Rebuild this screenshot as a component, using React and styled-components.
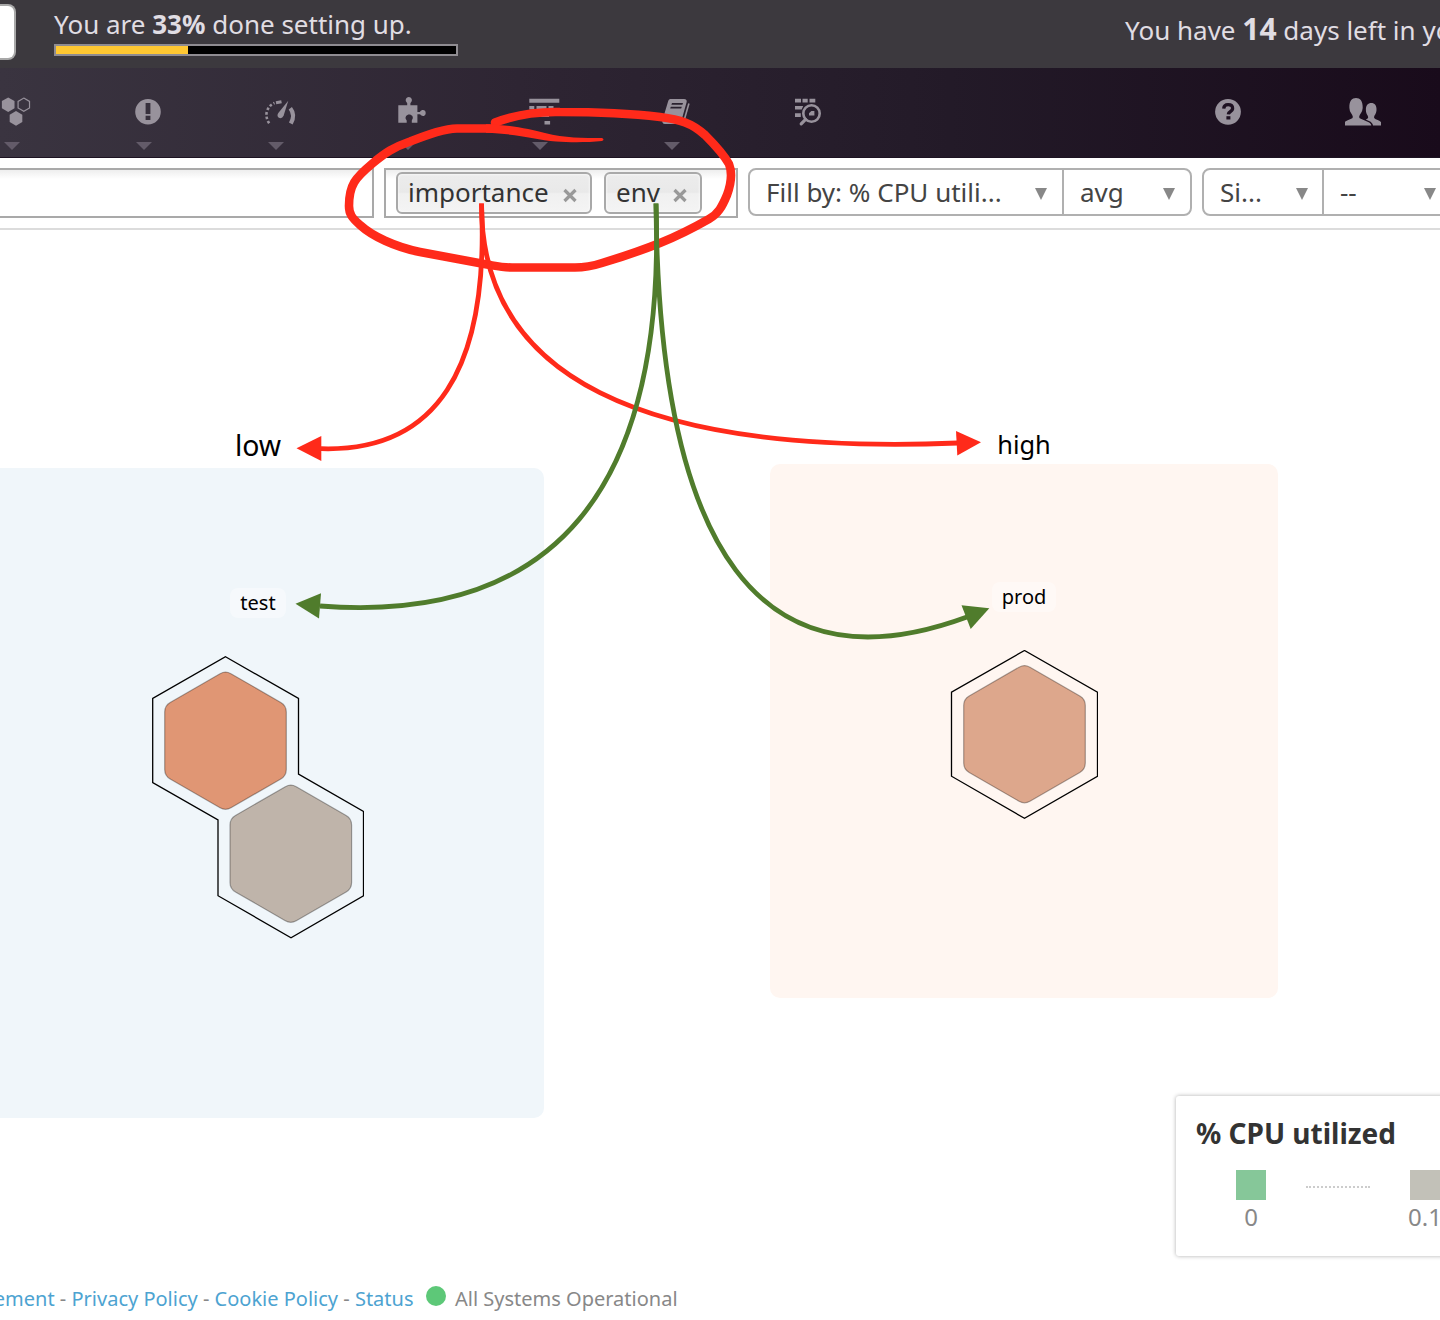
import React from "react";
import styled, { createGlobalStyle } from "styled-components";

const Global = createGlobalStyle`
  * { box-sizing: border-box; }
  html, body { margin: 0; background: #fff; overflow: hidden; }
  body { font-family: "Noto Sans", "Open Sans", sans-serif; }
`;

const Page = styled.div`
  position: relative;
  display: flex;
  flex-direction: column;
  width: 1440px;
  height: 1320px;
  overflow: hidden;
  background: #fff;
`;

const TrialBar = styled.header`
  display: flex;
  height: 68px;
  flex: none;
  background: #3c393e;
  color: #e0dde3;
  font-size: 26px;
  line-height: 36px;
  white-space: nowrap;
`;

const TrialButton = styled.div`
  width: 16px;
  height: 56px;
  flex: none;
  margin-top: 4px;
  background: #fff;
  border: 2px solid #a8a8a8;
  border-left: 0;
  border-radius: 0 8px 8px 0;
`;

const Setup = styled.div`
  width: 404px;
  flex: none;
  margin: 6px 0 0 38px;
`;

const SetupText = styled.div`
  height: 38px;
`;

const Progress = styled.div`
  height: 12px;
  border: 2px solid #8f8c91;
  background: #000;
`;

const ProgressFill = styled.div`
  width: 33%;
  height: 100%;
  background: #ffc832;
`;

const TrialText = styled.div`
  flex: none;
  margin: 7px 0 0 667px;
  line-height: 44px;
  strong { font-size: 30px; }
`;

const Nav = styled.nav`
  display: flex;
  height: 90px;
  flex: none;
  background: linear-gradient(90deg, #3a3440 0%, #2e2533 36%, #231a28 66%, #190b1b 100%);
  border-bottom: 1px solid #1d1322;
`;

const NavItem = styled.div`
  display: flex;
  flex-direction: column;
  width: 132px;
  flex: none;
  margin-left: ${(p) => p.$before || 0}px;
  padding-top: 26px;
  color: #98929c;
`;

const NavIcon = styled.svg`
  width: 40px;
  height: 36px;
  fill: currentColor;
`;

const Caret = styled.span`
  width: 0;
  margin: 12px 0 0 4px;
  border: 8px solid transparent;
  border-top-color: #635b69;
  border-bottom: 0;
`;

const Filters = styled.section`
  display: flex;
  height: 72px;
  flex: none;
  gap: 10px;
  padding-top: 10px;
  border-bottom: 2px solid #dcdcdc;
  color: #444;
  font-size: 26px;
`;

const Field = styled.div`
  display: flex;
  gap: 12px;
  flex: none;
  width: ${(p) => p.$width}px;
  height: 50px;
  padding: 2px 10px;
  border: 2px solid #a9a9a9;
  border-left-width: ${(p) => (p.$cut ? 0 : 2)}px;
  background: linear-gradient(#eee, #fff 9px);
`;

const Chip = styled.div`
  display: flex;
  justify-content: space-between;
  width: ${(p) => p.$width}px;
  height: 42px;
  padding: 0 12.5px 0 10px;
  border: 2px solid #a9a9a9;
  border-radius: 6px;
  background: linear-gradient(#ececec, #e9e9e9 48%, #f0f0f0 52%, #f4f4f4);
  box-shadow: inset 0 0 3px #fff;
  color: #333;
  line-height: 37px;
`;

const Remove = styled.svg`
  width: 16px;
  height: 16px;
  margin-top: 13px;
  stroke: #999;
  stroke-width: 3.2;
`;

const Selects = styled.div`
  display: flex;
  flex: none;
  height: 48px;
  width: ${(p) => p.$width}px;
  border: 2px solid #b0b0b0;
  border-radius: 8px;
`;

const Select = styled.div`
  display: flex;
  justify-content: space-between;
  width: ${(p) => p.$width}px;
  padding: 0 ${(p) => p.$end || 15}px 0 16px;
  line-height: 45px;
  & + & { border-left: 2px solid #b0b0b0; }
`;

const Arrow = styled.span`
  width: 0;
  height: 0;
  margin-top: 18px;
  border: 6px solid transparent;
  border-top: 12px solid #888;
  border-bottom: 0;
`;

const HostMap = styled.main`
  display: flex;
  gap: 226px;
  flex: 1;
  align-items: flex-start;
  margin-left: -28px;
`;

const Group = styled.section`
  width: ${(p) => p.$width}px;
  flex: none;
  text-align: center;
`;

const GroupTitle = styled.h2`
  margin: 0;
  height: ${(p) => p.$height}px;
  padding-top: ${(p) => p.$top}px;
  color: #000;
  font-weight: 400;
  font-size: ${(p) => p.$size}px;
  line-height: 40px;
`;

const GroupBody = styled.div`
  display: flex;
  flex-direction: column;
  align-items: center;
  height: ${(p) => p.$height}px;
  padding-top: ${(p) => p.$top}px;
  background: ${(p) => p.$fill};
  border-radius: 10px;
`;

const SubTitle = styled.div`
  width: ${(p) => p.$width}px;
  height: 30px;
  border-radius: 8px;
  background: rgba(255, 255, 255, 0.4);
  color: #000;
  font-size: 20px;
  line-height: 29px;
`;

const Hosts = styled.svg`
  display: block;
  flex: none;
  margin-top: 38px;
`;

const Outline = styled.path`
  fill: none;
  stroke: #000;
  stroke-width: 1.3;
`;

const Hexagon = styled.path`
  fill: ${(p) => p.$fill};
  stroke: #000;
  stroke-opacity: 0.32;
  stroke-width: 1.2;
`;

const Legend = styled.aside`
  position: absolute;
  left: 1176px;
  top: 1096px;
  width: 400px;
  height: 160px;
  padding: 18px 0 0 20px;
  background: #fff;
  border-radius: 3px;
  box-shadow: 0 0 4px rgba(0, 0, 0, 0.32);
`;

const LegendTitle = styled.div`
  height: 56px;
  color: #333;
  font-size: 28px;
  font-weight: 700;
  line-height: 39px;
`;

const Scale = styled.div`
  display: flex;
  gap: 40px;
  padding-left: 40px;
`;

const Stop = styled.div`
  display: flex;
  flex-direction: column;
  align-items: center;
  width: 30px;
  color: #888;
  font-size: 24px;
  line-height: 34px;
`;

const Swatch = styled.span`
  width: 30px;
  height: 30px;
  background: ${(p) => p.$fill};
`;

const Dots = styled.div`
  width: 64px;
  height: 18px;
  border-bottom: 2px dotted #ccc;
`;

const Footer = styled.footer`
  display: flex;
  height: 44px;
  flex: none;
  color: #888;
  font-size: 20px;
  line-height: 46px;
  white-space: nowrap;
`;

const Links = styled.div`
  display: flex;
  justify-content: flex-end;
  width: 413.5px;
  white-space: pre;
`;

const Link = styled.a`
  color: #4da3d1;
`;

const StatusDot = styled.span`
  width: 20px;
  height: 20px;
  margin: 10px 9px 0 12.5px;
  border-radius: 50%;
  background: #5dc878;
`;

const Markup = styled.svg`
  position: absolute;
  inset: 0;
  pointer-events: none;
`;

const Stroke = styled.path`
  fill: none;
  stroke: ${(p) => p.$color};
  stroke-width: ${(p) => p.$width || 4.8};
  stroke-linecap: ${(p) => p.$cap || "butt"};
  stroke-linejoin: round;
`;

const RED = "#ff2a1a";
const GREEN = "#507c2c";

const hexPoints = (cx, cy, r) =>
  [0, 1, 2, 3, 4, 5].map((i) => {
    const a = (Math.PI / 3) * i - Math.PI / 2;
    return [cx + r * Math.cos(a), cy + r * Math.sin(a)];
  });

const roundedHex = (cx, cy, r = 70.2, k = 0.09) => {
  const pts = hexPoints(cx, cy, r);
  const mix = (a, b) => [a[0] + (b[0] - a[0]) * k, a[1] + (b[1] - a[1]) * k];
  return (
    pts
      .map((p, i) => {
        const a = mix(p, pts[(i + 5) % 6]);
        const b = mix(p, pts[(i + 1) % 6]);
        return `${i ? "L" : "M"}${a} Q${p} ${b}`;
      })
      .join(" ") + "Z"
  );
};

const hex = (cx, cy, r) => "M" + hexPoints(cx, cy, r).join("L") + "Z";

/* Icons share a 40x36 box whose origin is the left edge of each menu entry. */
const icons = {
  hosts: (
    <>
      <path d={hex(8.2, 10.7, 7.3)} />
      <path d={hex(23.8, 10.7, 6.6)} fill="none" stroke="currentColor" strokeWidth="1.2" />
      <path d={hex(16, 24.4, 7.3)} />
    </>
  ),
  alert: (
    <path
      fillRule="evenodd"
      d="M16 5a12.8 12.8 0 1 1 0 25.6a12.8 12.8 0 1 1 0-25.6zM13.6 9v11h4.8V9zM13.6 21.7v4.3h4.8v-4.300z"
    />
  ),
  gauge: (
    <>
      <path d="M5.200 29.300Q1.600 24 2.700 18 4.600 11.500 10.500 9" fill="none" stroke="currentColor" strokeWidth="2.600" strokeDasharray="2.600 2" />
      <path d="M12 8.800 17.500 7.700" fill="none" stroke="currentColor" strokeWidth="3" />
      <path d="M24.300 6.800 19.600 21.800q-1.800 3.600-5.100 1.800-1.900-2-.2-4.600z" />
      <path d="M26.300 14.300Q31.600 21 26.800 29.500" fill="none" stroke="currentColor" strokeWidth="4.200" />
    </>
  ),
  puzzle: (
    <path d="M2.300 11.300h8.900v-2.100q-2.200-1.700-1.400-4c1.300-3 4.800-3 6 0q.8 2.300-1.400 4v2.100h7v6.700h2.500c1.900-3.200 6-2.300 5.800 1.200-.2 3.100-3.700 3.900-5.600 1.100h-2.700v8.500h-5.600v-2.400q2-1.800.6-4.300c-1.500-2.300-4.900-2.300-6.300 0q-1.400 2.500.6 4.300v2.400H2.300z" />
  ),
  monitors: (
    <path d="M1.300 4.700h30v4h-30zM1.300 12h5v3.500h-5zM8.500 12h10v3.500h-10zM20.500 12h5v3.500h-5zM11 19.500h10v3.500H11zM16.500 27h5.600v3.500h-5.600z" />
  ),
  notebook: (
    <>
      <path
        fillRule="evenodd"
        d="M10 4.900H24q3.400.3 2.600 3.300l-5.500 19.600q-.8 2.300-3 2.300H5q-3.500-.3-2.500-4L8.300 6.800q.4-1.400 1.700-1.900zM12 9l-.6 1.700h11L23 9zM10.800 12.700l-.6 1.700h11l.6-1.700z"
      />
      <path d="M28.900 9.500 23.200 29.500" fill="none" stroke="currentColor" strokeWidth="1.600" />
      <path d="M5 27h13" fill="none" stroke="#2b2230" strokeWidth="1.300" />
    </>
  ),
  logs: (
    <>
      <path d="M3 4.800h6v3.600H3zM10.500 4.800h5.200v3.600h-5.200zM17.500 4.800h5.800v3.600h-5.800zM3 12h8.200l-1.500 3.600H3zM3 19.300h5.800V23H3z" />
      <circle cx="19.500" cy="19.500" r="8.200" fill="none" stroke="currentColor" strokeWidth="2.600" />
      <path d="m13.600 25.400-4.400 4.500" fill="none" stroke="currentColor" strokeWidth="3.200" strokeLinecap="round" />
      <path d="M17 21.400v-2.200l2.400-2.200h3v4.400z" />
    </>
  ),
  help: (
    <>
      <circle cx="16" cy="17.800" r="12.900" />
      <path d="M11.700 14.700q.3-4 4.400-4 4.500 0 4.500 3.600 0 2-2.400 3.400-1.800 1-1.900 2.700" fill="none" stroke="#1e1122" strokeWidth="3.300" />
      <path d="M14.400 22.200h4v3.300h-4z" fill="#1e1122" />
    </>
  ),
  users: (
    <path d="M1 31.500v-3.800q1.500-1 5.600-2.600 2.200-1 2.300-2.200-.3-1.600-2.200-4.300-1-1.500-1.300-4.700C5 7 8 4 12 4s7 3 6.700 9.900q-.4 3.200-1.400 4.700-1.900 2.700-2.200 4.300.1 1.200 2.300 2.200l6.200 2.600q3.700 1.500 3.700 3.800zM29 31.500q-.5-3-4-4.500l-3.200-1.500q2.500-.6 2.400-2.200-.2-1.500-1.500-3.300-.8-1.500-.8-3.700C21.700 11 24 9 27.300 9s5.500 2.200 5.200 7.300q-.2 2.400-1 3.700-1.400 1.700-1.500 3.300 0 1.200 1.700 2 4.500 1.700 5.300 3v3.200z" />
  ),
};

const MENU = [
  { icon: "hosts", caret: true },
  { icon: "alert", caret: true },
  { icon: "gauge", caret: true },
  { icon: "puzzle", caret: true },
  { icon: "monitors", caret: true },
  { icon: "notebook", caret: true },
  { icon: "logs" },
  { icon: "help", before: 288 },
  { icon: "users" },
];

function FilterChip({ width, children }) {
  return (
    <Chip $width={width}>
      <span>{children}</span>
      <Remove viewBox="0 0 16 16">
        <path d="M2.500 3 13.500 14M13.500 3 2.500 14" />
      </Remove>
    </Chip>
  );
}

function Dropdown({ width, end, children }) {
  return (
    <Select $width={width} $end={end}>
      <span>{children}</span>
      <Arrow />
    </Select>
  );
}

export default function App() {
  return (
    <>
      <Global />
      <Page>
        <TrialBar>
          <TrialButton />
          <Setup>
            <SetupText>
              You are <strong>33%</strong> done setting up.
            </SetupText>
            <Progress>
              <ProgressFill />
            </Progress>
          </Setup>
          <TrialText>
            You have <strong>14</strong> days left in your trial.
          </TrialText>
        </TrialBar>

        <Nav>
          {MENU.map((m) => (
            <NavItem key={m.icon} $before={m.before}>
              <NavIcon viewBox="0 0 40 36">{icons[m.icon]}</NavIcon>
              {m.caret && <Caret />}
            </NavItem>
          ))}
        </Nav>

        <Filters>
          <Field $width={374} $cut />
          <Field $width={354}>
            <FilterChip width={196}>importance</FilterChip>
            <FilterChip width={98}>env</FilterChip>
          </Field>
          <Selects $width={444}>
            <Dropdown width={312}>Fill by: % CPU utili...</Dropdown>
            <Dropdown width={128}>avg</Dropdown>
          </Selects>
          <Selects $width={300}>
            <Dropdown width={118} end={14}>Si...</Dropdown>
            <Dropdown width={129}>--</Dropdown>
          </Selects>
        </Filters>

        <HostMap>
          <Group $width={572}>
            <GroupTitle $height={238} $top={195} $size={28.4}>low</GroupTitle>
            <GroupBody $height={650} $top={120} $fill="#f0f6fa">
              <SubTitle $width={56}>test</SubTitle>
              <Hosts width="212" height="284" viewBox="152 656 212 284">
                <Outline d="M225.500 656.700 298.500 698.500V774L363.500 811.500V895.700L291 937.700 218 895.700V820L152.700 782.500V698.500Z" />
                <Hexagon $fill="#e09674" d={roundedHex(225.5, 740.7)} />
                <Hexagon $fill="#bfb4aa" d={roundedHex(290.8, 853.7)} />
              </Hosts>
            </GroupBody>
          </Group>
          <Group $width={508}>
            <GroupTitle $height={234} $top={194} $size={25.4}>high</GroupTitle>
            <GroupBody $height={534} $top={118} $fill="#fff6f1">
              <SubTitle $width={64}>prod</SubTitle>
              <Hosts width="148" height="170" viewBox="950 650 148 170">
                <Outline d="M1024.500 650.500 1097.500 692.200V776.200L1024.500 818.300 951.500 776.200V692.200Z" />
                <Hexagon $fill="#dda78c" d={roundedHex(1024.5, 734.2)} />
              </Hosts>
            </GroupBody>
          </Group>
        </HostMap>

        <Footer>
          <Links>
            <Link>Master Subscription Agreement</Link> - <Link>Privacy Policy</Link> - <Link>Cookie Policy</Link> - <Link>Status</Link>
          </Links>
          <StatusDot />
          <span>All Systems Operational</span>
        </Footer>

        <Legend>
          <LegendTitle>% CPU utilized</LegendTitle>
          <Scale>
            <Stop>
              <Swatch $fill="#86c799" />0
            </Stop>
            <Dots />
            <Stop>
              <Swatch $fill="#c2c1b8" />0.1
            </Stop>
          </Scale>
        </Legend>

        <Markup width="1440" height="1320" viewBox="0 0 1440 1320">
          <Stroke
            $color={RED}
            $width={8.6}
            $cap="round"
            d="M495 122.500C515 115 538 111.500 560 112C595 112 635 114 660 117C680 119.500 692 123 705 135C717 147 724 155 729 164C733 174 731 184 727 195C722 207 718 214 709 219C695 227 680 235 660 243C640 251 622 257 602 263C591 266.500 583 267.500 575 267.500H512C502 267.500 496 266 487 264.500L420 252C395 247 372 236 360 225C352 218 349 214 349 206C349 185 355 178 373 163C385 153 394 147 410 141.500C430 134 445 128.500 457 128.500H490"
          />
          <path
            fill={RED}
            d="M486 124.200C512 125 530 129.500 545 133C565 138 583 138 602 138Q605 139.500 602 141C588 142.500 570 142.500 556 141.500C535 139.500 515 133.500 486 132.800Z"
          />
          <Stroke $color={RED} d="M481.500 203.500Q493 454 321 448.700" />
          <Stroke $color={RED} d="M481.500 203.500Q480 462 958 443" />
          <path fill={RED} d="M296.500 448.300 321.300 436V461Z" />
          <path fill={RED} d="M981 442.300 956 431 957.300 455.500Z" />
          <Stroke $color={GREEN} d="M656 203.500Q671 633 320 606" />
          <Stroke $color={GREEN} d="M656 203.500Q660 730 967 617" />
          <path fill={GREEN} d="M295.500 603.700 321 593.300 319 618.500Z" />
          <path fill={GREEN} d="M989.300 608.300 961.500 605.200 970.700 629Z" />
        </Markup>
      </Page>
    </>
  );
}
